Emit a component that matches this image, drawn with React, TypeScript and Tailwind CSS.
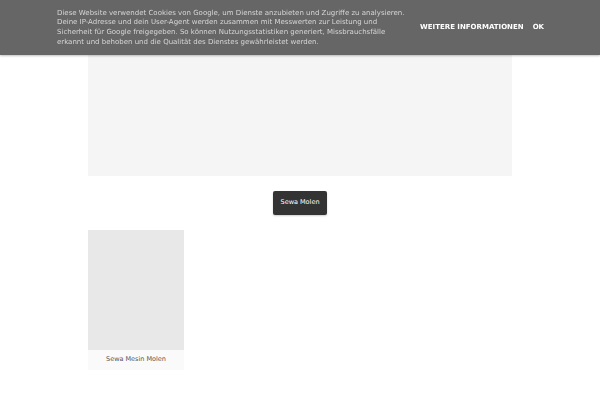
export default function App() {
  return (
    <div className="relative min-h-[400px] bg-white font-['DejaVu_Sans',sans-serif]">
      {/* cookie notice */}
      <div className="fixed inset-x-0 top-0 z-10 flex h-[55px] items-center bg-[#666666] pl-[57px] pr-[56px] shadow-[0_1px_2px_rgba(0,0,0,0.25)]">
        <p className="w-[350px] pt-[1px] text-[7px] leading-[9.6px] text-[#d6d6d6]">
          Diese Website verwendet Cookies von Google, um Dienste anzubieten und Zugriffe zu analysieren. Deine IP-Adresse und dein User-Agent werden zusammen mit Messwerten zur Leistung und Sicherheit für Google freigegeben. So können Nutzungsstatistiken generiert, Missbrauchsfälle erkannt und behoben und die Qualität des Dienstes gewährleistet werden.
        </p>
        <div className="ml-auto flex gap-[9px] text-[7px] font-bold text-white">
          <span>WEITERE INFORMATIONEN</span>
          <span>OK</span>
        </div>
      </div>

      <div className="mx-auto w-[424px]">
        <div className="h-[176px] bg-[#f5f5f5]" />
        <div className="flex justify-center pt-[15px]">
          <button className="h-[24px] w-[54px] rounded-[2px] bg-[#333333] text-[6.5px] text-white shadow-[0_1px_2px_rgba(0,0,0,0.2)]">
            Sewa Molen
          </button>
        </div>
        <div className="mt-[15px] w-[96px]">
          <div className="h-[120px] bg-[#e8e8e8]" />
          <div className="flex h-[20px] items-center justify-center bg-[#fafafa] text-[6.5px] text-[#555555]">
            Sewa Mesin Molen
          </div>
        </div>
      </div>
    </div>
  );
}
